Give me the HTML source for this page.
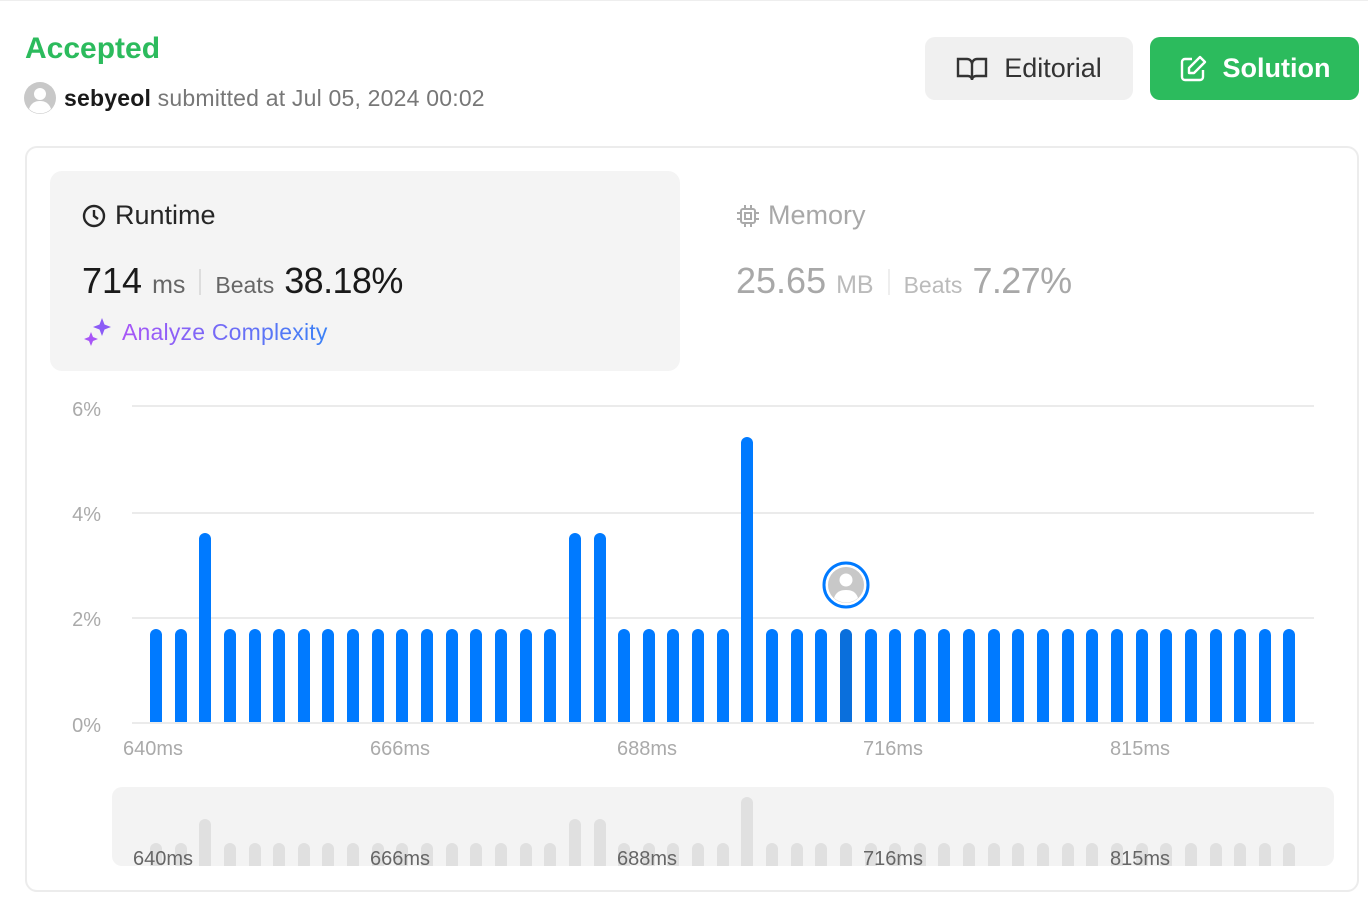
<!DOCTYPE html>
<html><head><style>
*{box-sizing:border-box;margin:0;padding:0}
body{width:1368px;height:897px;background:#fff;font-family:"Liberation Sans","DejaVu Sans",sans-serif;position:relative;overflow:hidden;color:#262626}
.abs{position:absolute}
</style></head><body>
<div class="abs" style="left:0;top:0;width:1368px;height:1px;background:#eee"></div>
<div class="abs" style="left:25px;top:32px;font-size:30px;font-weight:600;color:#2cbb5d">Accepted</div>
<svg class="abs" style="left:24px;top:82px" width="32" height="32" viewBox="0 0 32 32"><circle cx="16" cy="16" r="16" fill="#c8c8c8"/><circle cx="16" cy="12" r="6" fill="#fff"/><path d="M5 27c2-6 6-8 11-8s9 2 11 8a16 16 0 0 1-22 0z" fill="#fff"/></svg>
<div class="abs" style="left:64px;top:85px;font-size:23px;color:#777;letter-spacing:0.2px"><b style="color:#1a1a1a;font-weight:600">sebyeol</b> submitted at Jul 05, 2024 00:02</div>
<div class="abs" style="left:925px;top:37px;width:208px;height:63px;background:#f0f0f0;border-radius:10px;font-size:27px;color:#333;display:flex;align-items:center;justify-content:center;gap:16px">
<svg width="32" height="26" viewBox="0 0 32 26" fill="none" stroke="#333" stroke-width="2.4"><path d="M2 3h9a5 5 0 0 1 5 5v16a4 4 0 0 0-4-4H2z M30 3h-9a5 5 0 0 0-5 5v16a4 4 0 0 1 4-4h10z"/></svg>Editorial</div>
<div class="abs" style="left:1150px;top:37px;width:209px;height:63px;background:#2cbb5d;border-radius:10px;font-size:27px;font-weight:600;color:#fff;display:flex;align-items:center;justify-content:center;gap:16px">
<svg width="28" height="28" viewBox="0 0 28 28" fill="none" stroke="#fff" stroke-width="2.4" stroke-linejoin="round"><path d="M13 4H6a3 3 0 0 0-3 3v15a3 3 0 0 0 3 3h15a3 3 0 0 0 3-3v-7"/><path d="M21 2l5 5-11 11h-5v-5z"/></svg>Solution</div>
<div class="abs" style="left:25px;top:146px;width:1334px;height:746px;border:2px solid #ececec;border-radius:12px"></div>
<div class="abs" style="left:50px;top:171px;width:630px;height:200px;background:#f4f4f4;border-radius:12px"></div>
<svg class="abs" style="left:82px;top:204px" width="24" height="24" viewBox="0 0 24 24" fill="none" stroke="#262626" stroke-width="2.4"><circle cx="12" cy="12" r="10"/><path d="M12 6v6l4 3"/></svg>
<div class="abs" style="left:115px;top:200px;font-size:27px;color:#262626">Runtime</div>
<div class="abs" style="left:82px;top:260px;font-size:36px;color:#1a1a1a;white-space:nowrap">714 <span style="font-size:25px;color:#666">ms</span><span style="display:inline-block;width:2px;height:26px;background:#ddd;margin:0 14px;vertical-align:-2px"></span><span style="font-size:23px;color:#666">Beats</span> <span style="letter-spacing:-0.6px">38.18%</span></div>
<svg class="abs" style="left:84px;top:318px" width="28" height="28" viewBox="0 0 28 28"><path d="M18 0l2.5 6.5L27 9l-6.5 2.5L18 18l-2.5-6.5L9 9l6.5-2.5z" fill="#8b5cf6"/><path d="M7 14l2 5 5 2-5 2-2 5-2-5-5-2 5-2z" fill="#a855f7"/></svg>
<div class="abs" style="left:122px;top:319px;font-size:23px;letter-spacing:0.2px;background:linear-gradient(90deg,#a855f7,#3b82f6);-webkit-background-clip:text;color:transparent">Analyze Complexity</div>
<svg class="abs" style="left:736px;top:204px" width="24" height="24" viewBox="0 0 24 24" fill="none" stroke="#aaa" stroke-width="2"><rect x="5" y="5" width="14" height="14" rx="2"/><rect x="9" y="9" width="6" height="6"/><path d="M9 1v4M15 1v4M9 19v4M15 19v4M1 9h4M1 15h4M19 9h4M19 15h4"/></svg>
<div class="abs" style="left:768px;top:200px;font-size:27px;color:#a8a8a8">Memory</div>
<div class="abs" style="left:736px;top:260px;font-size:36px;color:#a8a8a8;white-space:nowrap">25.65 <span style="font-size:25px;color:#bbb">MB</span><span style="display:inline-block;width:2px;height:26px;background:#eee;margin:0 14px;vertical-align:-2px"></span><span style="font-size:23px;color:#bbb">Beats</span> <span style="letter-spacing:-0.6px">7.27%</span></div>
<div class="abs" style="left:112px;top:787px;width:1222px;height:79px;background:#f3f3f3;border-radius:10px"></div>
<svg class="abs" style="left:0;top:0" width="1368" height="897">
<g stroke="#ebebeb" stroke-width="2"><line x1="132" y1="406" x2="1314" y2="406"/><line x1="132" y1="513" x2="1314" y2="513"/><line x1="132" y1="618" x2="1314" y2="618"/><line x1="132" y1="723" x2="1314" y2="723"/></g>
<g font-size="20" fill="#aaa" font-family="Liberation Sans,sans-serif" text-anchor="end"><text x="101" y="416">6%</text><text x="101" y="521">4%</text><text x="101" y="626">2%</text><text x="101" y="732">0%</text></g>
<g font-size="20" fill="#aaa" font-family="Liberation Sans,sans-serif"><text x="123" y="755">640ms</text><text x="370" y="755">666ms</text><text x="617" y="755">688ms</text><text x="863" y="755">716ms</text><text x="1110" y="755">815ms</text></g>
<g id="bars"></g>
<g font-size="20" fill="#666" font-family="Liberation Sans,sans-serif"><text x="133" y="865">640ms</text><text x="370" y="865">666ms</text><text x="617" y="865">688ms</text><text x="863" y="865">716ms</text><text x="1110" y="865">815ms</text></g>
<circle cx="846" cy="585" r="22" fill="#fff" stroke="#007aff" stroke-width="3"/><circle cx="846" cy="585" r="18" fill="#c8c8c8"/><circle cx="846" cy="580" r="6.5" fill="#fff"/><path d="M834 598c2-6 6-8 12-8s10 2 12 8a18 18 0 0 1-24 0z" fill="#fff"/>
</svg>
<script>
var g=document.getElementById('bars'),s='';
for(var i=0;i<47;i++){var x=Math.round(150+i*24.64);var h=93,mh=22;
if(i==2||i==17||i==18){h=189;mh=46}if(i==24){h=285;mh=68}
var c=i==28?'#0a6fdc':'#007aff';
s+='<rect x="'+x+'" y="'+(722-h)+'" width="12" height="'+h+'" rx="6" fill="'+c+'"/><rect x="'+x+'" y="'+(716-h/2)+'" width="12" height="'+(h/2+6)+'" fill="'+c+'"/>';
s+='<rect x="'+x+'" y="'+(865-mh)+'" width="12" height="'+(mh+6)+'" rx="6" fill="#e0e0e0"/>';}
g.innerHTML=s;
</script>
<div class="abs" style="left:112px;top:866px;width:1222px;height:10px;background:#fff"></div>
</body></html>
